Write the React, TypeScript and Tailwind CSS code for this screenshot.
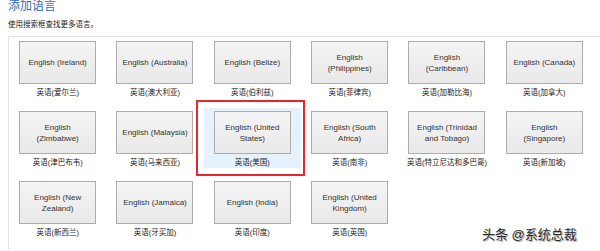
const LANGS = [
  { en: "English (Ireland)", zh: "英语(爱尔兰)" },
  { en: "English (Australia)", zh: "英语(澳大利亚)" },
  { en: "English (Belize)", zh: "英语(伯利兹)" },
  { en: "English (Philippines)", zh: "英语(菲律宾)" },
  { en: "English (Caribbean)", zh: "英语(加勒比海)" },
  { en: "English (Canada)", zh: "英语(加拿大)" },
  { en: "English (Zimbabwe)", zh: "英语(津巴布韦)" },
  { en: "English (Malaysia)", zh: "英语(马来西亚)" },
  { en: "English (United States)", zh: "英语(美国)", selected: true },
  { en: "English (South Africa)", zh: "英语(南非)" },
  { en: "English (Trinidad and Tobago)", zh: "英语(特立尼达和多巴哥)" },
  { en: "English (Singapore)", zh: "英语(新加坡)" },
  { en: "English (New Zealand)", zh: "英语(新西兰)" },
  { en: "English (Jamaica)", zh: "英语(牙买加)" },
  { en: "English (India)", zh: "英语(印度)" },
  { en: "English (United Kingdom)", zh: "英语(英国)" },
]

const FONT = "font-['Liberation_Sans','Noto_Sans_CJK_SC',sans-serif]"

export default function App() {
  return (
    <div className={`relative w-[600px] h-[251px] overflow-hidden bg-white ${FONT}`}>
      {/* Header */}
      <div className="px-2">
        <h1 className="text-[12px] leading-[12px] text-[#2f6db5]">添加语言</h1>
        <p className="mt-[8px] text-[7.5px] leading-[10px] text-[#222]">使用搜索框查找更多语言。</p>
      </div>

      {/* Panel */}
      <div className="ml-2 mt-[6px] border-t border-l border-[#e3e3e3] h-[214px]">
        <div className="grid grid-cols-6 w-[584px] gap-y-[10px] pt-[1px]">
          {LANGS.map((lang) => (
            <div
              key={lang.en}
              className={`relative flex flex-col items-center h-[60px] pt-[3px] ${lang.selected ? "bg-[#e5f1fb]" : ""}`}
            >
              <div className="w-[77px] h-[43px] border border-[#acacac] bg-gradient-to-b from-[#f4f4f4] to-[#e9e9e9] flex items-center justify-center px-[4px] text-center text-[8px] leading-[11px] text-[#333]">
                {lang.en}
              </div>
              <div className="mt-[4px] text-[7.5px] leading-[10px] text-[#222] whitespace-nowrap">{lang.zh}</div>
              {lang.selected && (
                <div className="absolute -left-[8px] -right-[4px] -top-[8px] -bottom-[8px] border-2 border-[#e8262b]" />
              )}
            </div>
          ))}
        </div>
      </div>

      {/* Watermark */}
      <div className="absolute left-[482px] top-[227px] text-[13px] leading-[16px] text-[#2a2a2a] whitespace-nowrap [text-shadow:0_0_2px_#fff,1px_1px_1px_#888]">
        头条 @系统总裁
      </div>
    </div>
  )
}
